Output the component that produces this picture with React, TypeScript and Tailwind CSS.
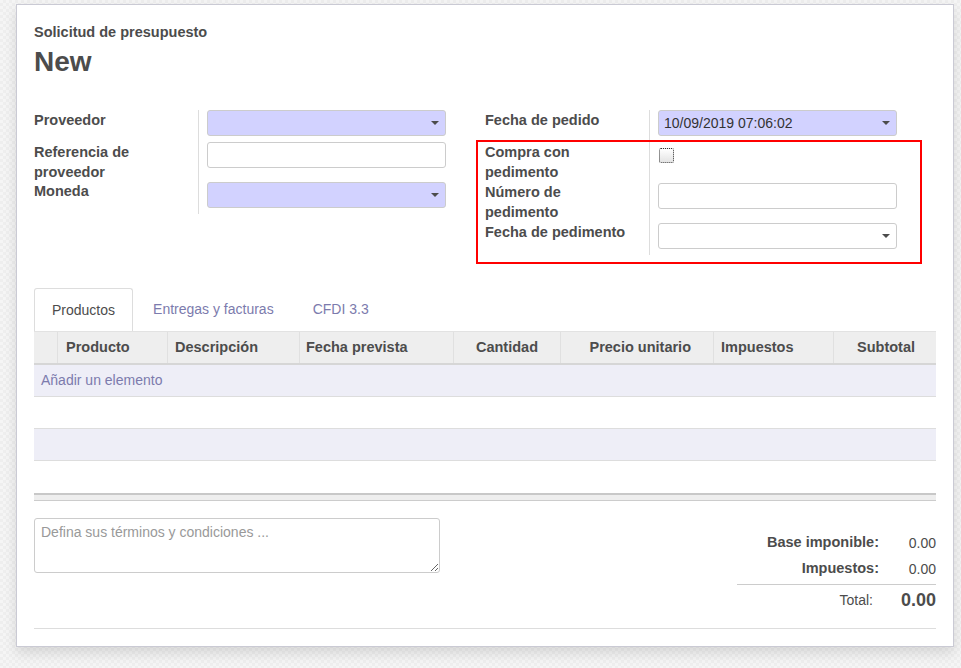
import React from 'react';

const Caret = () => (
  <span className="h-0 w-0 border-x-[4px] border-t-[4px] border-x-transparent border-t-[#4c4c4c]" />
);

const Select = ({ value, required }: { value?: string; required?: boolean }) => (
  <div
    className={`flex h-[26px] w-full items-center justify-between rounded-[3px] border border-[#ccc] pl-[5px] pr-[6px] text-[#333] ${
      required ? 'bg-[#d2d2ff]' : 'bg-white'
    }`}
  >
    <span>{value}</span>
    <Caret />
  </div>
);

const TextInput = () => <div className="h-[26px] w-full rounded-[3px] border border-[#ccc] bg-white" />;

const Field = ({ label, children }: { label: React.ReactNode; children?: React.ReactNode }) => (
  <div className="flex">
    <div className="w-[164px] shrink-0 pr-2 text-[14.5px] font-bold leading-[20px] whitespace-nowrap">{label}</div>
    <div className="flex-1 border-l border-[#ddd] pb-[6px] pl-[8px]">{children}</div>
  </div>
);

const columns = [
  { name: '', cls: '' },
  { name: 'Producto', cls: 'pl-[8px]' },
  { name: 'Descripción', cls: 'pl-[7px]' },
  { name: 'Fecha prevista', cls: 'pl-[6px]' },
  { name: 'Cantidad', cls: 'justify-end pr-[22px]' },
  { name: 'Precio unitario', cls: 'justify-end pr-[22px]' },
  { name: 'Impuestos', cls: 'pl-[7px]' },
  { name: 'Subtotal', cls: 'justify-end pr-[21px]' },
];

export default function App() {
  return (
    <div className="min-h-[668px] bg-[#f2f2f2] bg-[image:repeating-conic-gradient(#eeeeee_0%_25%,#f5f5f5_0%_50%)] bg-[size:6px_6px] pt-[4px] font-['Liberation_Sans',Arial,sans-serif] text-[14px] text-[#4c4c4c]">
      <div className="ml-[16px] w-[938px] border border-[#cacad4] bg-white px-[17px] pt-[17px] pb-[17px] shadow-[0_6px_12px_rgba(0,0,0,0.12)]">
        {/* Title */}
        <div className="text-[14.5px] font-bold leading-[20px]">Solicitud de presupuesto</div>
        <h1 className="mt-[3px] text-[28px] font-bold leading-[34px]">New</h1>

        {/* Main fields */}
        <div className="mt-[31px] grid grid-cols-2">
          <div className="pr-[39px]">
            <Field label="Proveedor">
              <Select required />
            </Field>
            <Field label={<>Referencia de<br />proveedor</>}>
              <TextInput />
            </Field>
            <div className="-mt-px">
              <Field label="Moneda">
                <div className="pt-px">
                  <Select required />
                </div>
              </Field>
            </div>
          </div>

          <div className="relative pr-[39px]">
            <Field label="Fecha de pedido">
              <Select required value="10/09/2019 07:06:02" />
            </Field>
            <Field label={<>Compra con<br />pedimento</>}>
              <div className="ml-[1px] pt-[6px]">
                <div className="h-[15px] w-[15px] rounded-[2px] border border-dotted border-[#333] bg-gradient-to-b from-white to-[#e4e4e4]" />
              </div>
            </Field>
            <Field label={<>Número de<br />pedimento</>}>
              <div className="pt-px">
                <TextInput />
              </div>
            </Field>
            <Field label="Fecha de pedimento">
              <div className="pt-px">
                <Select />
              </div>
            </Field>
            <div className="absolute left-[-9px] top-[30px] h-[124px] w-[446px] border-2 border-[#ff0000]" />
          </div>
        </div>

        {/* Tabs */}
        <div className="mt-[33px] flex h-[43px] items-stretch">
          <div className="rounded-t-[3px] border border-b-0 border-[#ddd] bg-white px-[17px] pt-[11px] leading-[20px]">
            Productos
          </div>
          <div className="pl-[20px] pr-[18px] pt-[11px] leading-[20px] text-[#7c7bad]">Entregas y facturas</div>
          <div className="pl-[21px] pr-[18px] pt-[11px] leading-[20px] text-[#7c7bad]">CFDI 3.3</div>
        </div>

        {/* Lines table */}
        <div className="grid h-[34px] grid-cols-[24px_110px_132px_154px_107px_153px_120px_1fr] border-t border-b-2 border-t-[#e2e2e2] border-b-[#d6d6d6] bg-[#eee] text-[14.5px] font-bold">
          {columns.map((c, i) => (
            <div
              key={i}
              className={`flex items-center ${i < columns.length - 1 ? 'border-r border-[#e0e0e0]' : ''} ${c.cls}`}
            >
              {c.name}
            </div>
          ))}
        </div>
        <div className="flex h-[32px] items-center border-b border-[#ddd] bg-[#eeeef7] pl-[7px] text-[#7c7bad]">
          Añadir un elemento
        </div>
        <div className="h-[32px] border-b border-[#ddd] bg-white" />
        <div className="h-[32px] border-b border-[#ddd] bg-[#eeeef7]" />
        <div className="h-[32px] bg-white" />
        <div className="h-[8px] border-t-2 border-b border-t-[#c8c8c8] border-b-[#ccc] bg-[#eee]" />

        {/* Notes and totals */}
        <div className="flex items-start justify-between">
          <textarea
            readOnly
            placeholder="Defina sus términos y condiciones ..."
            className="mt-[17px] h-[55px] w-[406px] rounded-[3px] border border-[#ccc] px-[6px] py-[3px] leading-[20px] text-[#4c4c4c] outline-none placeholder:text-[#999]"
          />
          <div className="mt-[29px] w-[199px]">
            <div className="flex h-[26px] items-center justify-end">
              <span className="text-[14.5px] font-bold">Base imponible:</span>
              <span className="w-[57px] text-right">0.00</span>
            </div>
            <div className="flex h-[26px] items-center justify-end">
              <span className="text-[14.5px] font-bold">Impuestos:</span>
              <span className="w-[57px] text-right">0.00</span>
            </div>
            <div className="mt-[2px] flex h-[32px] items-center justify-end border-t border-[#ccc]">
              <span className="pr-[6px]">Total:</span>
              <span className="w-[57px] text-right text-[18px] font-bold">0.00</span>
            </div>
          </div>
        </div>
        <div className="mt-[12px] border-t border-[#ddd]" />
      </div>
    </div>
  );
}
